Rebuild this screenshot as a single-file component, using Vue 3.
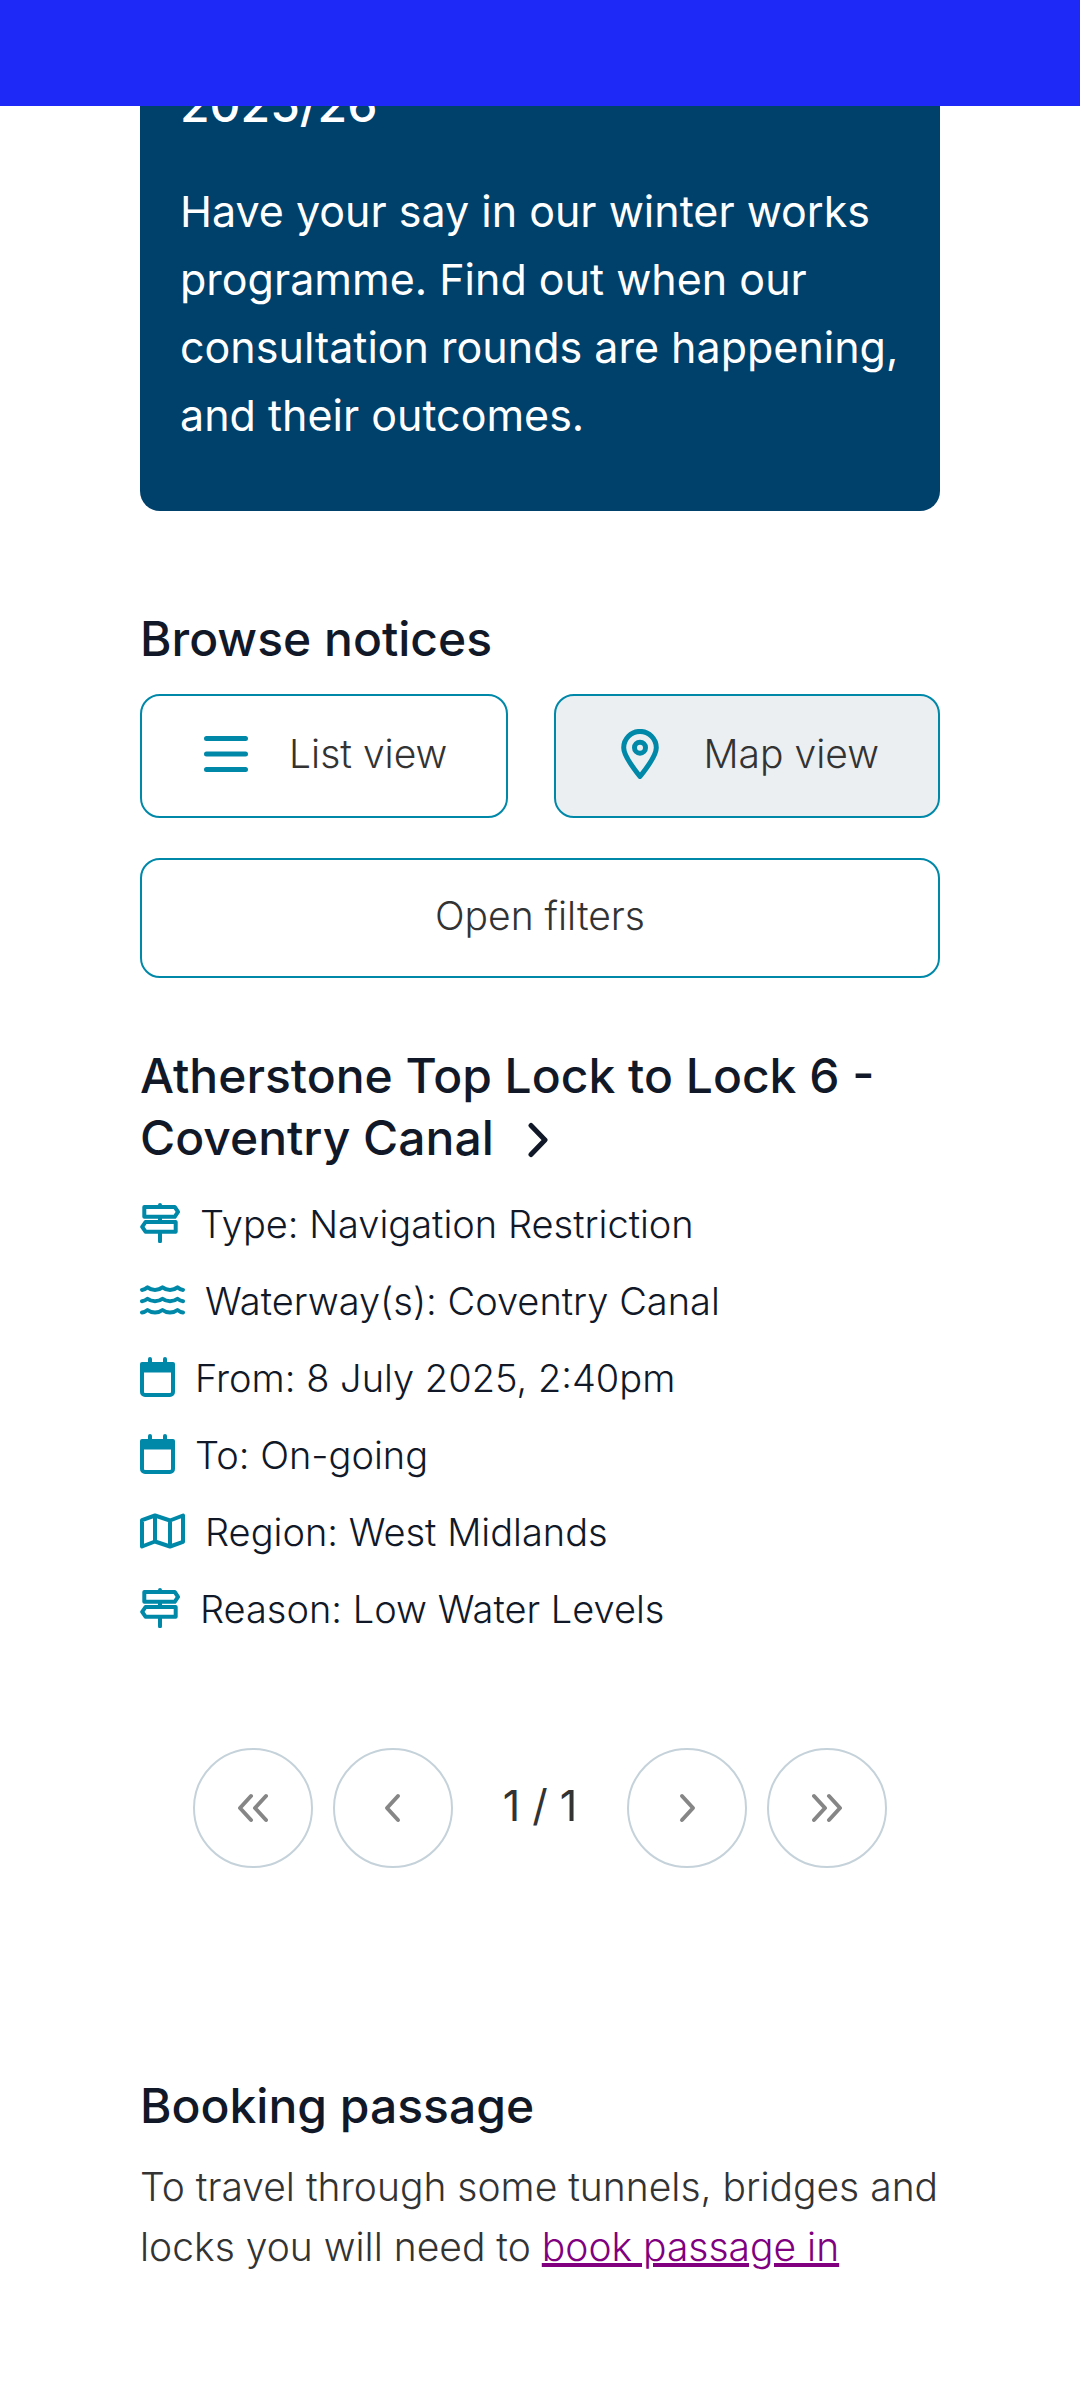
<script setup>
const details = [
  { icon: 'sign', label: 'Type', value: 'Navigation Restriction' },
  { icon: 'water', label: 'Waterway(s)', value: 'Coventry Canal' },
  { icon: 'calendar', label: 'From', value: '8 July 2025, 2:40pm' },
  { icon: 'calendar', label: 'To', value: 'On-going' },
  { icon: 'map', label: 'Region', value: 'West Midlands' },
  { icon: 'sign', label: 'Reason', value: 'Low Water Levels' },
]
</script>

<template>
  <div class="page">
    <header class="topbar"></header>
    <main class="content">
      <section class="promo">
        <h2 class="title">2025/26</h2>
        <p>Have your say in our winter works programme. Find out when our consultation rounds are happening, and their outcomes.</p>
      </section>

      <section class="browse">
        <h2 class="title">Browse notices</h2>
        <div class="views">
          <button type="button" class="btn view">
            <svg width="50" height="50" viewBox="0 0 50 50" class="stroke thick" aria-hidden="true">
              <path d="M5.500 9.500H44.500M5.500 25H44.500M5.500 40.500H44.500" />
            </svg>
            <span>List view</span>
          </button>
          <button type="button" class="btn view active">
            <svg width="50" height="50" viewBox="0 0 50 50" class="stroke thick" aria-hidden="true">
              <path d="M25 47.500C19 40 8.700 27 8.700 18.700a16.300 16.300 0 0 1 32.600 0C41.300 27 31 40 25 47.500z" />
              <circle cx="25" cy="18.700" r="5.500" />
            </svg>
            <span>Map view</span>
          </button>
        </div>
        <button type="button" class="btn filters">Open filters</button>
      </section>

      <article class="notice">
        <h3 class="title">
          <a href="#">Atherstone Top Lock to Lock 6 - Coventry Canal<svg class="chevron stroke" width="20" height="36" viewBox="0 0 20 36" aria-hidden="true"><path d="M3 3.500L17 18L3 32.500" /></svg></a>
        </h3>
        <ul class="details">
          <li v-for="item in details" :key="item.label">
            <svg v-if="item.icon === 'sign'" class="stroke" width="40" height="40" viewBox="0 0 40 40" aria-hidden="true">
              <path d="M20 2V4M20 14V19M20 29V38.200M4.300 3.900H34.700L38 8.900L34.700 13.800H4.300zM35.700 19H5.500L2.200 23.900L5.500 28.700H35.700z" />
            </svg>
            <svg v-else-if="item.icon === 'water'" class="stroke" width="45" height="40" viewBox="0 0 45 40" aria-hidden="true">
              <path v-for="n in 3" :key="n" :transform="`translate(0 ${(n - 1) * 11.300})`" d="M2 9.900C4 9.700 6 8.600 7.500 7.400C9.500 9 12 9.900 15 9.900S20.500 9 22.500 7.400C24.500 9 27 9.900 30 9.900S35.500 9 37.500 7.400C39 8.600 41 9.700 43 9.900" />
            </svg>
            <svg v-else-if="item.icon === 'calendar'" class="stroke" width="35" height="40" viewBox="0 0 35 40" aria-hidden="true">
              <path d="M10 2V8M25 2V8" />
              <rect x="2" y="7" width="31" height="31" rx="3" />
              <path class="solid" d="M2 7H33V13.500H2z" />
            </svg>
            <svg v-else class="stroke" width="45" height="40" viewBox="0 0 45 40" aria-hidden="true">
              <path d="M2 9.200L15 4.500L30 9.500L43 4.500V30.800L30 35.500L15 30.500L2 35.500zM15 4.500V30.500M30 9.500V35.500" />
            </svg>
            <span>{{ item.label }}: {{ item.value }}</span>
          </li>
        </ul>
      </article>

      <nav class="pager" aria-label="Pagination">
        <button type="button" aria-label="First page">
          <svg class="stroke" width="30" height="30" viewBox="0 0 30 30"><path d="M13 3L2 15L13 27M28 3L17 15L28 27" /></svg>
        </button>
        <button type="button" aria-label="Previous page">
          <svg class="stroke" width="30" height="30" viewBox="0 0 30 30"><path d="M20 3L9 15L20 27" /></svg>
        </button>
        <span class="count">1 / 1</span>
        <button type="button" aria-label="Next page">
          <svg class="stroke" width="30" height="30" viewBox="0 0 30 30"><path d="M10 3L21 15L10 27" /></svg>
        </button>
        <button type="button" aria-label="Last page">
          <svg class="stroke" width="30" height="30" viewBox="0 0 30 30"><path d="M2 3L13 15L2 27M17 3L28 15L17 27" /></svg>
        </button>
      </nav>

      <section class="booking">
        <h2 class="title">Booking passage</h2>
        <p>To travel through some tunnels, bridges and locks you will need to <a href="#">book passage in</a></p>
      </section>
    </main>
  </div>
</template>

<style>
body {
  margin: 0;
  background: #fff;
}
</style>

<style scoped>
.page {
  font-family: Inter, "Liberation Sans", sans-serif;
  font-size: 38px;
  font-weight: 300;
  color: #333;
}
.topbar {
  position: sticky;
  top: 0;
  z-index: 1;
  height: 106px;
  background: #1e28f7;
}
.content {
  padding: 0 140px;
}
.title {
  margin: 0;
  font-size: 48px;
  line-height: 62px;
  font-weight: 500;
  color: #111827;
}
.promo {
  margin-top: -56px;
  padding: 24px 40px 62px;
  border-radius: 20px;
  background: #00416c;
  color: #fff;
}
.promo .title {
  color: #fff;
}
.promo p {
  margin: 41px 0 0;
  font-size: 43px;
  font-weight: 400;
  line-height: 68px;
}
.browse {
  margin-top: 97px;
}
.views {
  display: flex;
  gap: 46px;
  margin-top: 24px;
}
.btn {
  box-sizing: border-box;
  padding: 0 16px 4px;
  border: 2px solid #0088a9;
  border-radius: 20px;
  background: #fff;
  color: #333;
  font-family: inherit;
  font-size: 39px;
  font-weight: inherit;
  line-height: 60px;
}
.view {
  flex: 1 1 auto;
  display: flex;
  align-items: center;
  justify-content: center;
  gap: 38px;
  height: 124px;
}
.view.active {
  background: #ebeff2;
}
.filters {
  width: 100%;
  height: 120px;
  margin-top: 40px;
}
.stroke {
  flex: none;
  fill: none;
  stroke: #0088a9;
  stroke-width: 4;
  stroke-linecap: round;
  stroke-linejoin: round;
}
.thick {
  stroke-width: 5;
}
.solid {
  fill: #0088a9;
}
.notice {
  margin-top: 67px;
}
.notice a {
  color: inherit;
  text-decoration: none;
}
.chevron {
  margin-left: 34px;
  stroke: #111827;
  stroke-width: 5;
  vertical-align: -3px;
}
.details {
  margin: 17px 0 0;
  padding: 0;
  list-style: none;
  color: #111827;
}
.details li {
  display: flex;
  align-items: center;
  gap: 20px;
  line-height: 77px;
}
.details svg {
  margin-bottom: 4px;
}
.pager {
  display: flex;
  align-items: center;
  justify-content: center;
  gap: 20px;
  margin-top: 100px;
}
.pager button {
  display: flex;
  align-items: center;
  justify-content: center;
  box-sizing: border-box;
  width: 120px;
  height: 120px;
  padding: 0;
  border: 2px solid #c5d2da;
  border-radius: 50%;
  background: #fff;
}
.pager .stroke {
  stroke: #868686;
}
.count {
  width: 134px;
  padding-bottom: 6px;
  font-size: 43px;
  font-weight: 400;
  line-height: 68px;
  text-align: center;
}
.booking {
  margin-top: 207px;
  padding-bottom: 100px;
}
.booking p {
  margin: 20px 0 0;
  font-size: 39px;
  line-height: 60px;
}
.booking a {
  color: #800080;
  text-decoration-thickness: 4px;
}
</style>
